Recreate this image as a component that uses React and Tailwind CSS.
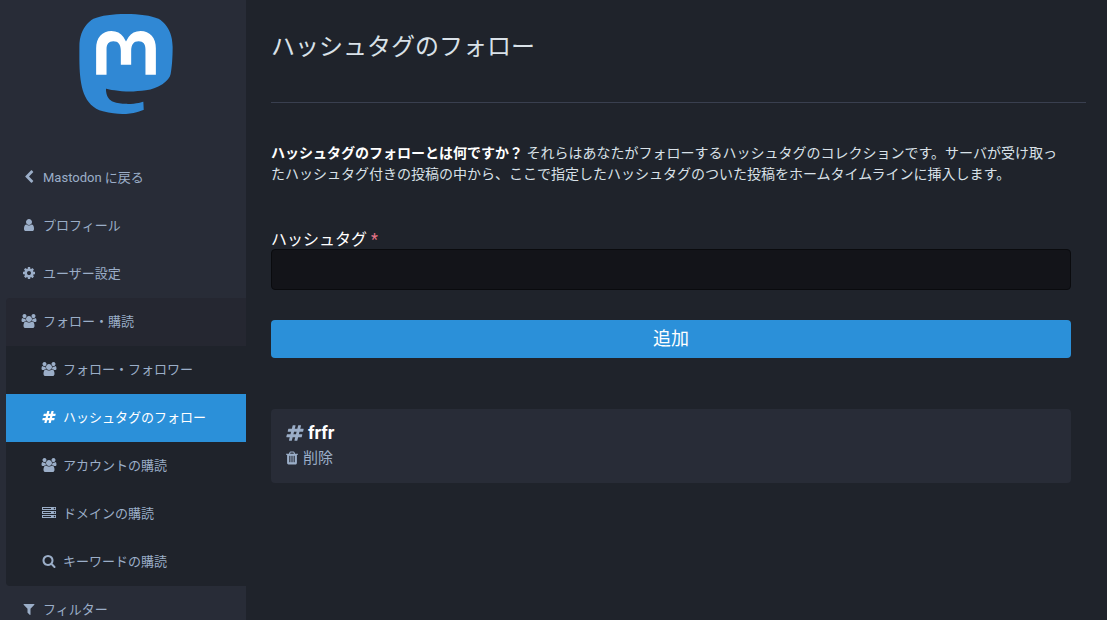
const ICONS = {
  chevronLeft: {
    box: '0 0 1792 1792',
    d: 'M1427 301l-531 531 531 531q19 19 19 45t-19 45l-166 166q-19 19-45 19t-45-19l-742-742q-19-19-19-45t19-45l742-742q19-19 45-19t45 19l166 166q19 19 19 45t-19 45z',
  },
  user: {
    box: '0 0 1792 1792',
    d: 'M1536 1399q0 109-62.5 187t-150.5 78h-854q-88 0-150.5-78t-62.5-187q0-85 8.5-160.5t31.5-152 58.5-131 94-89 134.5-34.5q131 128 313 128t313-128q76 0 134.5 34.5t94 89 58.5 131 31.5 152 8.5 160.5zm-256-887q0 159-112.5 271.5t-271.5 112.5-271.5-112.5-112.5-271.5 112.5-271.5 271.5-112.5 271.5 112.5 112.5 271.5z',
  },
  cog: {
    box: '0 0 1792 1792',
    d: 'M1152 896q0-106-75-181t-181-75-181 75-75 181 75 181 181 75 181-75 75-181zm512-109v222q0 12-8 23t-20 13l-185 28q-19 54-39 91 35 50 107 138 10 12 10 25t-9 23q-27 37-99 108t-94 71q-12 0-26-9l-138-108q-44 23-91 38-16 136-29 186-7 28-36 28h-222q-14 0-24.5-8.5t-11.5-21.5l-28-184q-49-16-90-37l-141 107q-10 9-25 9-14 0-25-11-126-114-165-168-7-10-7-23 0-12 8-23 15-21 51-66.5t54-70.5q-27-50-41-99l-183-27q-13-2-21-12.5t-8-23.5v-222q0-12 8-23t19-13l186-28q14-46 39-92-40-57-107-138-10-12-10-24 0-10 9-23 26-36 98.5-107.5t94.5-71.5q13 0 26 10l138 107q44-23 91-38 16-136 29-186 7-28 36-28h222q14 0 24.5 8.5t11.5 21.5l28 184q49 16 90 37l142-107q9-9 24-9 13 0 25 10 129 119 165 170 7 8 7 22 0 12-8 23-15 21-51 66.5t-54 70.5q26 50 41 98l183 28q13 2 21 12.5t8 23.5z',
  },
  users: {
    box: '0 0 1792 1792',
    d: 'M529 896q-162 5-265 128h-134q-82 0-138-40.5t-56-118.5q0-353 124-353 6 0 43.5 21t97.5 42.5 119 21.5q67 0 133-23-5 37-5 66 0 139 81 256zm1071 637q0 120-73 189.5t-194 69.5h-874q-121 0-194-69.5t-73-189.5q0-53 3.5-103.5t14-109 26.5-108.5 43-97.5 62-81 85.5-53.5 111.5-20q10 0 43 21.5t73 48 107 48 135 21.5 135-21.5 107-48 73-48 43-21.5q61 0 111.5 20t85.5 53.5 62 81 43 97.5 26.5 108.5 14 109 3.5 103.5zm-1024-1277q0 106-75 181t-181 75-181-75-75-181 75-181 181-75 181 75 75 181zm704 384q0 159-112.5 271.5t-271.5 112.5-271.5-112.5-112.5-271.5 112.5-271.5 271.5-112.5 271.5 112.5 112.5 271.5zm576 225q0 78-56 118.5t-138 40.5h-134q-103-123-265-128 81-117 81-256 0-29-5-66 66 23 133 23 59 0 119-21.5t97.5-42.5 43.5-21q124 0 124 353zm-128-609q0 106-75 181t-181 75-181-75-75-181 75-181 181-75 181 75 75 181z',
  },
  hashtag: {
    box: '0 0 1792 1792',
    d: 'M991 1024l64-256h-254l-64 256h254zm768-504l-56 224q-7 24-31 24h-327l-64 256h311q15 0 25 12 10 14 6 28l-56 224q-5 24-31 24h-327l-81 328q-7 24-31 24h-224q-16 0-26-12-9-12-6-28l78-312h-254l-81 328q-7 24-31 24h-225q-15 0-25-12-9-12-6-28l78-312h-311q-15 0-25-12-9-12-6-28l56-224q7-24 31-24h327l64-256h-311q-15 0-25-12-10-14-6-28l56-224q5-24 31-24h327l81-328q7-24 32-24h224q15 0 25 12 9 12 6 28l-78 312h254l81-328q7-24 32-24h224q15 0 25 12 9 12 6 28l-78 312h311q15 0 25 12 9 12 6 28z',
  },
  server: {
    box: '0 0 1792 1792',
    d: 'M128 1408h1024v-128h-1024v128zm0-512h1024v-128h-1024v128zm1568 448q0-40-28-68t-68-28-68 28-28 68 28 68 68 28 68-28 28-68zm-1568-960h1024v-128h-1024v128zm1568 448q0-40-28-68t-68-28-68 28-28 68 28 68 68 28 68-28 28-68zm0-512q0-40-28-68t-68-28-68 28-28 68 28 68 68 28 68-28 28-68zm96 832v384h-1792v-384h1792zm0-512v384h-1792v-384h1792zm0-512v384h-1792v-384h1792z',
  },
  search: {
    box: '0 0 1792 1792',
    d: 'M1216 832q0-185-131.5-316.5t-316.5-131.5-316.5 131.5-131.5 316.5 131.5 316.5 316.5 131.5 316.5-131.5 131.5-316.5zm512 832q0 52-38 90t-90 38q-54 0-90-38l-343-342q-179 124-399 124-143 0-273.5-55.5t-225-150-150-225-55.5-273.5 55.5-273.5 150-225 225-150 273.5-55.5 273.5 55.5 225 150 150 225 55.5 273.5q0 220-124 399l343 343q37 37 37 90z',
  },
  filter: {
    box: '0 0 1792 1792',
    d: 'M1595 295q17 41-14 70l-493 493v742q0 42-39 59-13 5-25 5-27 0-45-19l-256-256q-19-19-19-45v-486l-493-493q-31-29-14-70 17-39 59-39h1280q42 0 59 39z',
  },
  trash: {
    box: '192 0 1408 1792',
    d: 'M704 1376v-704q0-14-9-23t-23-9h-64q-14 0-23 9t-9 23v704q0 14 9 23t23 9h64q14 0 23-9t9-23zm256 0v-704q0-14-9-23t-23-9h-64q-14 0-23 9t-9 23v704q0 14 9 23t23 9h64q14 0 23-9t9-23zm256 0v-704q0-14-9-23t-23-9h-64q-14 0-23 9t-9 23v704q0 14 9 23t23 9h64q14 0 23-9t9-23zm-544-992h448l-48-117q-7-9-17-11h-317q-10 2-17 11zm928 32v64q0 14-9 23t-23 9h-96v948q0 83-47 143.5t-113 60.5h-832q-66 0-113-58.5t-47-141.5v-952h-96q-14 0-23-9t-9-23v-64q0-14 9-23t23-9h309l70-167q15-37 54-63t79-26h320q40 0 79 26t54 63l70 167h309q14 0 23 9t9 23z',
  },
};

function Icon({ name, className }) {
  const icon = ICONS[name];
  return (
    <svg viewBox={icon.box} fill="currentColor" aria-hidden="true" className={`shrink-0 overflow-visible ${className}`}>
      <path d={icon.d} />
    </svg>
  );
}

function Logo() {
  return (
    <svg viewBox="0 0 216.4144 232.00976" role="img" aria-label="Mastodon" className="h-[100px] w-[94px]">
      <path
        fill="#3088d4"
        d="M211.80734 139.0875c-3.18125 16.36625-28.4925 34.2775-57.5625 37.74875-15.15875 1.80875-30.08375 3.47125-45.99875 2.74125-26.0275-1.1925-46.565-6.2125-46.565-6.2125 0 2.53375.15625 4.94625.46875 7.2025 3.38375 25.68625 25.47 27.225 46.39125 27.9425 21.11625.7225 39.91875-5.20625 39.91875-5.20625l.8675 19.09s-14.77 7.93125-41.08125 9.39c-14.50875.7975-32.52375-.365-53.50625-5.91875C9.23234 213.82 1.40609 165.31125.20859 116.09125c-.365-14.61375-.14-28.39375-.14-39.91875 0-50.33 32.97625-65.0825 32.97625-65.0825C49.67234 3.45375 78.20359.2425 107.86484 0h.72875c29.66125.2425 58.21125 3.45375 74.8375 11.09 0 0 32.975 14.7525 32.975 65.0825 0 0 .41375 37.13375-4.59875 62.915"
      />
      <path
        fill="#fff"
        d="M177.50984 80.077v60.94125h-24.14375v-59.15c0-12.46875-5.24625-18.7975-15.74-18.7975-11.6025 0-17.4175 7.5075-17.4175 22.3525v32.37625H96.20734V85.42325c0-14.845-5.81625-22.3525-17.41875-22.3525-10.49375 0-15.74 6.32875-15.74 18.7975v59.15H38.90484V80.077c0-12.455 3.17125-22.3525 9.54125-29.675 6.56875-7.3225 15.17125-11.07625 25.85-11.07625 12.355 0 21.71125 4.74875 27.8975 14.2475l6.01375 10.08125 6.015-10.08125c6.185-9.49875 15.54125-14.2475 27.8975-14.2475 10.6775 0 19.28 3.75375 25.85 11.07625 6.36875 7.3225 9.54 17.22 9.54 29.675"
      />
    </svg>
  );
}

function NavLink({ icon, children, className = 'px-[15px] text-[#9baec8]', current }) {
  return (
    <a
      href="#"
      aria-current={current ? 'page' : undefined}
      className={`flex h-12 items-center gap-1.5 text-[13px] ${className}`}
    >
      <span className="flex w-4 justify-center pb-0.5">
        <Icon name={icon} className="size-[14px]" />
      </span>
      <span>{children}</span>
    </a>
  );
}

const SUB_LINKS = [
  { icon: 'users', label: 'フォロー・フォロワー' },
  { icon: 'hashtag', label: 'ハッシュタグのフォロー', current: true },
  { icon: 'users', label: 'アカウントの購読' },
  { icon: 'server', label: 'ドメインの購読' },
  { icon: 'search', label: 'キーワードの購読' },
];

function Sidebar() {
  return (
    <aside className="w-[246px] shrink-0 overflow-hidden bg-[#282c37] pl-[6px]">
      <a href="#" className="mt-[14px] mb-10 flex justify-center">
        <Logo />
      </a>
      <nav>
        <ul>
          <li><NavLink icon="chevronLeft">Mastodon に戻る</NavLink></li>
          <li><NavLink icon="user">プロフィール</NavLink></li>
          <li><NavLink icon="cog">ユーザー設定</NavLink></li>
          <li>
            <NavLink icon="users" className="rounded-tl bg-[#252731] px-[15px] text-[#9baec8]">フォロー・購読</NavLink>
            <ul className="overflow-hidden rounded-bl bg-[#1f232b]">
              {SUB_LINKS.map(({ icon, label, current }) => (
                <li key={label}>
                  <NavLink
                    icon={icon}
                    current={current}
                    className={current ? 'bg-[#2b90d9] px-[35px] text-white' : 'px-[35px] text-[#9baec8]'}
                  >
                    {label}
                  </NavLink>
                </li>
              ))}
            </ul>
          </li>
          <li><NavLink icon="filter">フィルター</NavLink></li>
        </ul>
      </nav>
    </aside>
  );
}

export default function App() {
  return (
    <div
      lang="ja"
      className="flex h-screen overflow-hidden bg-[#1f232b] font-['Roboto','Noto_Sans_CJK_JP',sans-serif] text-white"
    >
      <Sidebar />
      <main className="min-w-0 flex-1 overflow-hidden pr-[21px] pl-[25px]">
        <h1 className="border-b border-[#393f4f] pt-[27px] pb-[35px] text-2xl leading-10 text-[#d9e1e8]">
          ハッシュタグのフォロー
        </h1>
        <div className="pt-10 pr-[15px]">
          <p className="pr-2 text-sm leading-[21px] text-[#d9e1e8]">
            <strong className="font-bold text-white">ハッシュタグのフォローとは何ですか？</strong>{' '}
            それらはあなたがフォローするハッシュタグのコレクションです。サーバが受け取ったハッシュタグ付きの投稿の中から、ここで指定したハッシュタグのついた投稿をホームタイムラインに挿入します。
          </p>
          <form className="mt-[46px]" onSubmit={(event) => event.preventDefault()}>
            <label htmlFor="tag" className="block text-base leading-[18px]">
              ハッシュタグ <abbr title="必須" className="text-[#e87487] no-underline">*</abbr>
            </label>
            <input
              id="tag"
              type="text"
              required
              className="block h-[41px] w-full rounded border border-[#0a0b0e] bg-[#131419] px-[10px] text-base shadow-none outline-none"
            />
            <button
              type="submit"
              className="mt-[30px] block h-[38px] w-full rounded bg-[#2b90d9] text-lg leading-[38px] text-white"
            >
              追加
            </button>
          </form>
          <section className="mt-[51px] rounded bg-[#282c37] px-[15px] pt-[11px] pb-[13px]">
            <h2 className="flex items-center gap-1 text-lg leading-[26px] font-bold">
              <Icon name="hashtag" className="size-[18px] text-[#9baec8]" />
              frfr
            </h2>
            <a href="#" className="flex items-center gap-[5px] text-[15px] leading-6 text-[#9baec8]">
              <Icon name="trash" className="h-4 w-3" />
              削除
            </a>
          </section>
        </div>
      </main>
    </div>
  );
}
